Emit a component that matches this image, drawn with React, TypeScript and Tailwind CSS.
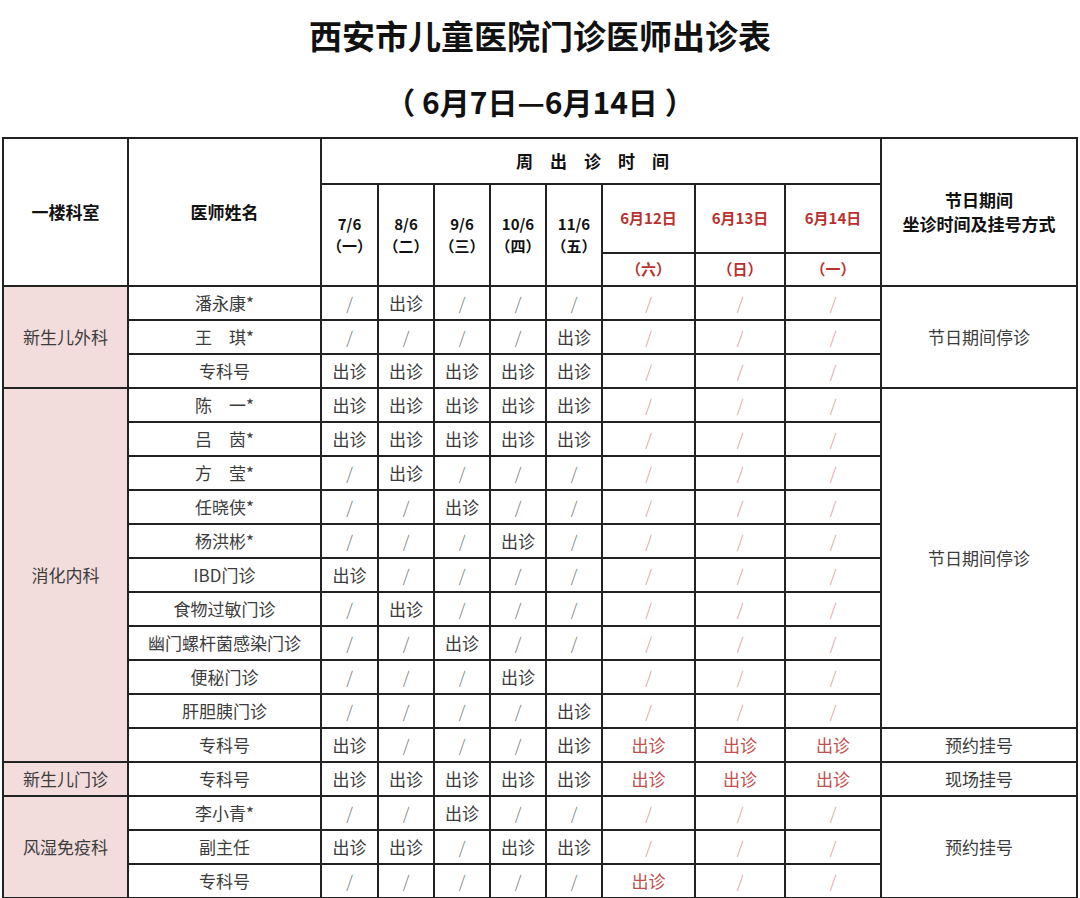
// 西安市儿童医院门诊医师出诊表 — a static schedule sheet rendered as a table.
const FONT = { fontFamily: '"Noto Sans CJK SC", "Noto Sans", sans-serif' };

type Cell = string; // '出诊' | '/' | ''

interface DoctorRow {
  name: string;
  cells: Cell[]; // 8 days: 5 weekdays + 3 holiday days
}

interface Dept {
  name: string;
  rows: DoctorRow[];
  // note column: [text, rowspan] groups, in order
  notes: [string, number][];
}

const X = '出诊';
const S = '/';

const depts: Dept[] = [
  {
    name: '新生儿外科',
    rows: [
      { name: '潘永康*', cells: [S, X, S, S, S, S, S, S] },
      { name: '王　琪*', cells: [S, S, S, S, X, S, S, S] },
      { name: '专科号', cells: [X, X, X, X, X, S, S, S] },
    ],
    notes: [['节日期间停诊', 3]],
  },
  {
    name: '消化内科',
    rows: [
      { name: '陈　一*', cells: [X, X, X, X, X, S, S, S] },
      { name: '吕　茵*', cells: [X, X, X, X, X, S, S, S] },
      { name: '方　莹*', cells: [S, X, S, S, S, S, S, S] },
      { name: '任晓侠*', cells: [S, S, X, S, S, S, S, S] },
      { name: '杨洪彬*', cells: [S, S, S, X, S, S, S, S] },
      { name: 'IBD门诊', cells: [X, S, S, S, S, S, S, S] },
      { name: '食物过敏门诊', cells: [S, X, S, S, S, S, S, S] },
      { name: '幽门螺杆菌感染门诊', cells: [S, S, X, S, S, S, S, S] },
      { name: '便秘门诊', cells: [S, S, S, X, '', S, S, S] },
      { name: '肝胆胰门诊', cells: [S, S, S, S, X, S, S, S] },
      { name: '专科号', cells: [X, S, S, S, X, X, X, X] },
    ],
    notes: [
      ['节日期间停诊', 10],
      ['预约挂号', 1],
    ],
  },
  {
    name: '新生儿门诊',
    rows: [{ name: '专科号', cells: [X, X, X, X, X, X, X, X] }],
    notes: [['现场挂号', 1]],
  },
  {
    name: '风湿免疫科',
    rows: [
      { name: '李小青*', cells: [S, S, X, S, S, S, S, S] },
      { name: '副主任', cells: [X, X, S, X, X, S, S, S] },
      { name: '专科号', cells: [S, S, S, S, S, X, S, S] },
    ],
    notes: [['预约挂号', 3]],
  },
];

const weekdays = [
  ['7/6', '（一）'],
  ['8/6', '（二）'],
  ['9/6', '（三）'],
  ['10/6', '（四）'],
  ['11/6', '（五）'],
];
const holidays = [
  ['6月12日', '（六）'],
  ['6月13日', '（日）'],
  ['6月14日', '（一）'],
];

const bd = 'border-2 border-[#222]';

function DayCell({ value, holiday }: { value: Cell; holiday: boolean }) {
  const color = holiday
    ? value === X
      ? 'text-[#c0504d]'
      : 'text-[#d99a98]'
    : value === X
      ? 'text-[#3c3c3c]'
      : 'text-[#777]';
  return (
    <td className={`${bd} text-center text-[17px] ${color}`}>
      {value === S ? <span className="font-light">/</span> : value}
    </td>
  );
}

export default function App() {
  // build the body rows, tracking where each note cell starts
  const body: React.ReactNode[] = [];
  depts.forEach((d) => {
    let noteIdx = 0;
    let noteStart = 0;
    d.rows.forEach((r, i) => {
      let note: React.ReactNode = null;
      if (noteIdx < d.notes.length && i === noteStart) {
        const [text, span] = d.notes[noteIdx];
        note = (
          <td rowSpan={span} className={`${bd} text-center text-[17px] text-[#3c3c3c]`}>
            {text}
          </td>
        );
        noteStart += span;
        noteIdx += 1;
      }
      body.push(
        <tr key={`${d.name}-${i}`} className="h-[34px]">
          {i === 0 && (
            <td
              rowSpan={d.rows.length}
              className={`${bd} bg-[#f2dcdc] text-center text-[17px] text-[#3c3c3c]`}
            >
              {d.name}
            </td>
          )}
          <td className={`${bd} text-center text-[17px] text-[#3c3c3c] whitespace-nowrap`}>{r.name}</td>
          {r.cells.map((c, j) => (
            <DayCell key={j} value={c} holiday={j >= 5} />
          ))}
          {note}
        </tr>,
      );
    });
  });

  return (
    <div className="w-[1080px] h-[898px] bg-white overflow-hidden" style={FONT}>
      <div className="h-[137px] flex flex-col items-center">
        <h1 className="mt-[13px] text-[33px] leading-[44px] font-bold text-[#111]">
          西安市儿童医院门诊医师出诊表
        </h1>
        <div className="mt-[24px] text-[30px] leading-[40px] font-bold text-[#111] whitespace-pre">
          （ 6月7日—6月14日 ）
        </div>
      </div>

      <table className="ml-[2px] w-[1074px] table-fixed border-collapse">
        <colgroup>
          <col className="w-[125px]" />
          <col className="w-[193px]" />
          <col className="w-[57px]" />
          <col className="w-[56px]" />
          <col className="w-[56px]" />
          <col className="w-[56px]" />
          <col className="w-[56px]" />
          <col className="w-[93px]" />
          <col className="w-[90px]" />
          <col className="w-[96px]" />
          <col className="w-[196px]" />
        </colgroup>
        <thead>
          <tr className="h-[46px]">
            <th rowSpan={3} className={`${bd} text-[17px] font-bold text-[#111]`}>
              一楼科室
            </th>
            <th rowSpan={3} className={`${bd} text-[17px] font-bold text-[#111]`}>
              医师姓名
            </th>
            <th colSpan={8} className={`${bd} text-[17px] font-bold text-[#111] tracking-[17px]`}>
              周出诊时间
            </th>
            <th rowSpan={3} className={`${bd} text-[17px] leading-[24px] font-bold text-[#111]`}>
              节日期间
              <br />
              坐诊时间及挂号方式
            </th>
          </tr>
          <tr className="h-[69px]">
            {weekdays.map(([d, w]) => (
              <th
                key={d}
                rowSpan={2}
                className={`${bd} text-[15px] leading-[22px] font-bold text-[#111] whitespace-nowrap`}
              >
                {d}
                <br />
                <span className="-mx-2">{w}</span>
              </th>
            ))}
            {holidays.map(([d]) => (
              <th key={d} className={`${bd} text-[15px] font-bold text-[#b8312f]`}>
                {d}
              </th>
            ))}
          </tr>
          <tr className="h-[33px]">
            {holidays.map(([d, w]) => (
              <th key={d} className={`${bd} text-[15px] font-bold text-[#b8312f]`}>
                {w}
              </th>
            ))}
          </tr>
        </thead>
        <tbody>{body}</tbody>
      </table>
    </div>
  );
}
